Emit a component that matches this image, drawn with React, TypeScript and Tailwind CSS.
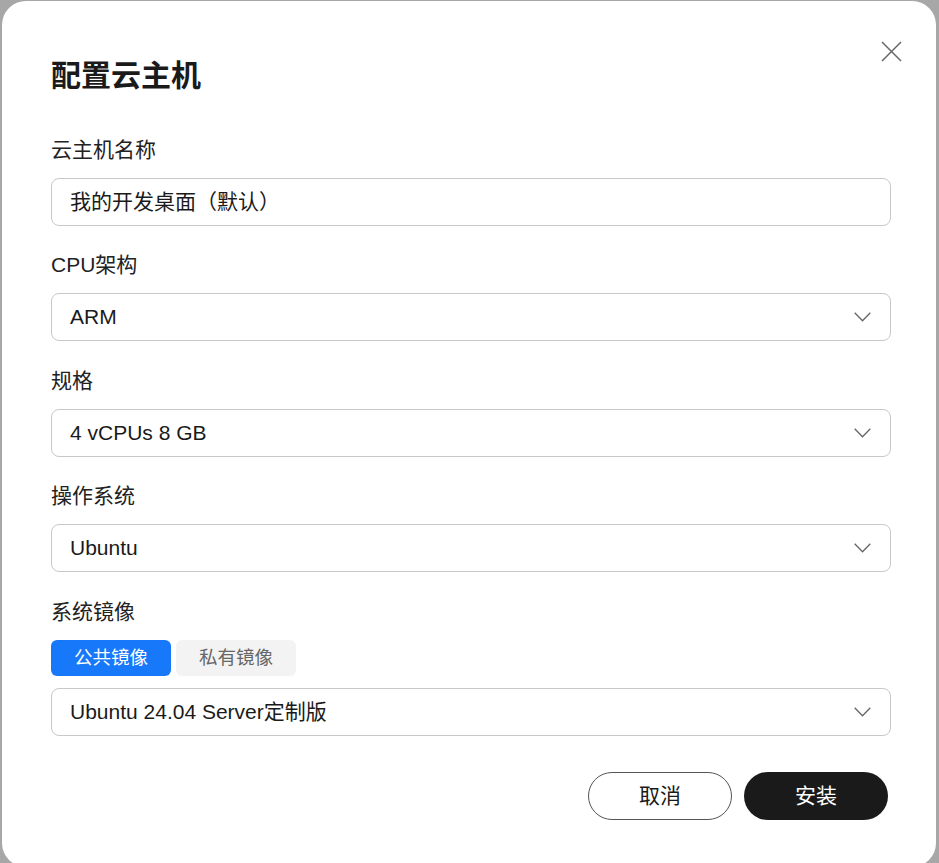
const font = { fontFamily: '"Liberation Sans", "Noto Sans CJK SC", sans-serif' };

function Chevron() {
  return (
    <svg width="17" height="10" viewBox="0 0 17 10" fill="none" className="text-[#666]">
      <path d="M0.7 0.8 L8.5 8.8 L16.3 0.8" stroke="currentColor" strokeWidth="1.3" />
    </svg>
  );
}

function Label({ children }: { children: React.ReactNode }) {
  return <div className="text-[21px] leading-[28px] text-[#222]">{children}</div>;
}

function Select({ value }: { value: string }) {
  return (
    <div className="mt-[14px] h-[48px] flex items-center justify-between rounded-[8px] border border-[#c8c8c8] bg-white pl-[18px] pr-[19px]">
      <span className="text-[21px] text-[#1a1a1a]">{value}</span>
      <Chevron />
    </div>
  );
}

export default function App() {
  return (
    <div className="h-[863px] w-[939px] overflow-hidden bg-[#a7a7a7] pt-px pl-[2px] pr-[3px]" style={font}>
      <div className="relative h-[866px] rounded-[24px] bg-white pt-[55px] pl-[49px] pr-[45px]">
        {/* Close */}
        <button className="absolute right-[34px] top-[40px] text-[#666]" aria-label="close">
          <svg width="21" height="21" viewBox="0 0 21 21" fill="none">
            <path d="M1 1 L20 20 M20 1 L1 20" stroke="currentColor" strokeWidth="1.5" />
          </svg>
        </button>

        <h1 className="text-[30px] leading-[40px] font-bold text-[#1a1a1a]">配置云主机</h1>

        <div className="mt-[40px]">
          <Label>云主机名称</Label>
          <div className="mt-[14px] h-[48px] flex items-center rounded-[8px] border border-[#c8c8c8] pl-[18px]">
            <span className="text-[21px] text-[#1a1a1a]">我的开发桌面（默认）</span>
          </div>
        </div>

        <div className="mt-[25px]">
          <Label>CPU架构</Label>
          <Select value="ARM" />
        </div>

        <div className="mt-[26px]">
          <Label>规格</Label>
          <Select value="4 vCPUs 8 GB" />
        </div>

        <div className="mt-[25px]">
          <Label>操作系统</Label>
          <Select value="Ubuntu" />
        </div>

        <div className="mt-[26px]">
          <Label>系统镜像</Label>
          <div className="mt-[14px] flex gap-[5px]">
            <button className="h-[36px] w-[120px] rounded-[6px] bg-[#1778fa] text-[18.5px] text-white">公共镜像</button>
            <button className="h-[36px] w-[120px] rounded-[6px] bg-[#f3f3f3] text-[18.5px] text-[#666]">私有镜像</button>
          </div>
          <div className="mt-[12px] h-[48px] flex items-center justify-between rounded-[8px] border border-[#c8c8c8] pl-[18px] pr-[19px]">
            <span className="text-[21px] text-[#1a1a1a]">Ubuntu 24.04 Server定制版</span>
            <Chevron />
          </div>
        </div>

        <div className="mt-[36px] flex justify-end gap-[12px] pr-[3px]">
          <button className="h-[48px] w-[144px] rounded-full border border-[#555] bg-white text-[21px] text-[#1a1a1a]">取消</button>
          <button className="h-[48px] w-[144px] rounded-full bg-[#1a1a1a] text-[21px] text-white">安装</button>
        </div>
      </div>
    </div>
  );
}
